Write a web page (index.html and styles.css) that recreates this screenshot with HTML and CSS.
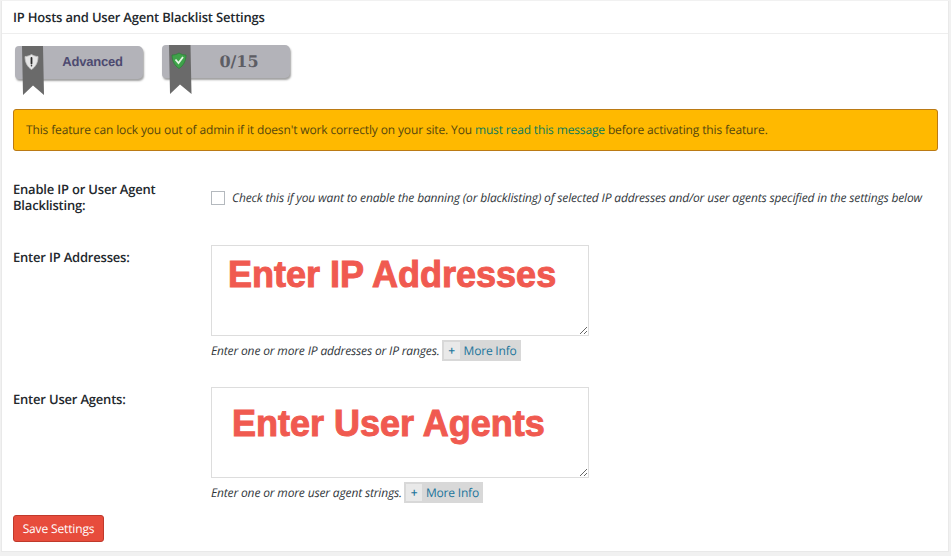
FILE: index.html
```html
<!DOCTYPE html>
<html lang="en">
<head>
<meta charset="utf-8">
<title>IP Hosts and User Agent Blacklist Settings</title>
<link rel="stylesheet" href="styles.css">
</head>
<body>
<div class="card">
  <h3 class="card-title">IP Hosts and User Agent Blacklist Settings</h3>
  <div class="card-body">
    <div class="badges">
      <div class="badge badge-level">
        <svg class="ribbon" width="23" height="50" viewBox="0 0 23 50">
          <path d="M0 0H21L22 49L11 39.500L1 49Z" fill="#6a6a6a"/>
          <path d="M9.500 8.500C12 10 14 10.500 16 10.500C16 16 14 20.500 9.500 23.500C5 20.500 3 16 3 10.500C5 10.500 7 10 9.500 8.500Z" fill="#e6e6e6" stroke="#c4c4c4" stroke-width=".8"/>
          <path d="M9.500 12V17.500" stroke="#2a2a2a" stroke-width="1.800" stroke-linecap="round"/>
          <circle cx="9.500" cy="19.800" r=".8" fill="#2a2a2a"/>
        </svg>
        <span class="badge-text">Advanced</span>
      </div>
      <div class="badge badge-score">
        <svg class="ribbon" width="23" height="50" viewBox="0 0 23 50">
          <path d="M0 0H21.500L22.500 49L11 39.500L1 49Z" fill="#6a6a6a"/>
          <path d="M10 8C12.500 9.500 14.500 10 17 10C17 16 14.500 20.500 10 23.500C5.500 20.500 3 16 3 10C5.500 10 7.500 9.500 10 8Z" fill="#3fa34a" stroke="#2f7f3a" stroke-width=".8"/>
          <path d="M6.500 14.500L9.500 18L14 12" fill="none" stroke="#e4f7e4" stroke-width="1.800"/>
        </svg>
        <span class="score-text">0/15</span>
      </div>
    </div>
    <div class="notice">This feature can lock you out of admin if it doesn't work correctly on your site. You <a class="notice-link" href="#">must read this message</a> before activating this feature.</div>
    <form class="settings">
      <div class="row row-check">
        <label class="row-label" for="enable">Enable IP or User Agent Blacklisting:</label>
        <div class="check-line">
          <input class="checkbox" id="enable" type="checkbox">
          <em class="desc">Check this if you want to enable the banning (or blacklisting) of selected IP addresses and/or user agents specified in the settings below</em>
        </div>
      </div>
      <div class="row row-ip">
        <label class="row-label" for="ips">Enter IP Addresses:</label>
        <div>
          <textarea class="area area-ip" id="ips">Enter IP Addresses</textarea>
          <div class="help">
            <em class="desc">Enter one or more IP addresses or IP ranges.</em>
            <span class="more"><span class="plus">+</span><span class="more-text">More Info</span></span>
          </div>
        </div>
      </div>
      <div class="row row-ua">
        <label class="row-label" for="uas">Enter User Agents:</label>
        <div>
          <textarea class="area area-ua" id="uas">Enter User Agents</textarea>
          <div class="help">
            <em class="desc">Enter one or more user agent strings.</em>
            <span class="more"><span class="plus">+</span><span class="more-text">More Info</span></span>
          </div>
        </div>
      </div>
      <button class="save" type="button">Save Settings</button>
    </form>
  </div>
</div>
</body>
</html>
```
FILE: styles.css
```css
* { box-sizing: border-box; }
html, body { margin: 0; height: 100%; }
body {
  background: #f1f1f1;
  font-family: "Open Sans", "Liberation Sans", sans-serif;
  font-size: 13px;
  color: #32373c;
  overflow: hidden;
  padding: 1px 2px 0 1px;
  text-rendering: geometricPrecision;
}
.card {
  background: #fff;
  border: 1px solid #e9e9e9;
  border-top: 0;
  height: 551px;
}
.card-title {
  margin: 0;
  height: 33px;
  padding: 0 0 0 11px;
  font-size: 13px;
  letter-spacing: -.2px;
  line-height: 33px;
  font-weight: 600;
  color: #23282d;
  border-bottom: 1px solid #eeeeee;
}
.card-body { padding: 0 10px 0 11px; }
.badges {
  display: flex;
  height: 75px;
  padding: 11px 0 0 2px;
  gap: 19px;
  align-items: flex-start;
}
.badge {
  position: relative;
  width: 128px;
  height: 33px;
  background: #b3b3b9;
  border-radius: 4px 5px 5px 4px;
  box-shadow: 1px 2px 2px #a2a2a2;
  display: flex;
  align-items: center;
  justify-content: center;
}
.badge-level { margin-top: 1px; }
.ribbon { position: absolute; left: 7px; top: 0; }
.badge-text {
  padding: 0 0 2px 27px;
  font-family: "Liberation Sans", sans-serif;
  font-weight: 700;
  font-size: 13px;
  letter-spacing: -.2px;
  color: #4d4a70;
}
.score-text {
  padding-left: 26px;
  font-family: "DejaVu Serif", "Liberation Serif", serif;
  font-weight: 700;
  font-size: 16px;
  color: #5d5d64;
}
.notice {
  height: 42px;
  background: #ffb900;
  border: 1px solid #bb7a14;
  border-radius: 3px;
  padding: 0 0 0 12px;
  line-height: 39px;
  font-size: 12px;
  letter-spacing: -.14px;
  color: #54460f;
}
.notice-link { color: #0a7a5c; text-decoration: none; }
.settings { display: flex; flex-direction: column; }
.row { display: grid; grid-template-columns: 198px 1fr; }
.row-label {
  font-size: 13px;
  letter-spacing: -.2px;
  line-height: 16px;
  font-weight: 600;
  color: #23282d;
}
.row-check { padding-top: 30px; height: 94px; }
.row-ip { height: 142px; }
.row-ua { height: 127px; }
.row-ip .row-label, .row-ua .row-label { padding-top: 4px; }
.row-check .row-label { width: 160px; }
.check-line { display: flex; align-items: center; height: 32px; }
.checkbox {
  appearance: none;
  width: 14px;
  height: 14px;
  margin: 1px 7px 0 0;
  border: 1px solid #b4b9be;
  background: #fff;
  flex: none;
}
.desc { font-size: 12px; letter-spacing: -.148px; color: #32373c; white-space: nowrap; }
.area {
  display: block;
  width: 378px;
  height: 91px;
  border: 1px solid #ddd;
  background: #fff;
  font-family: "Liberation Sans", sans-serif;
  font-weight: 700;
  font-size: 36px;
  line-height: 40px;
  color: #f05a50;
  -webkit-text-stroke: 1px #f05a50;
  overflow: hidden;
  outline: 0;
}
.area-ip { padding: 9px 0 0 16px; }
.area-ua { padding: 16px 0 0 20px; }
.help { display: flex; align-items: center; margin-top: 4px; height: 21px; }
.more {
  display: flex;
  align-items: center;
  height: 21px;
  margin-left: 2px;
  background: #d8d8d8;
  padding: 0 4px 0 2px;
  font-size: 12px;
  letter-spacing: -.2px;
  font-weight: 500;
}
.plus {
  width: 16px;
  text-align: center;
  background: #e9e9e9;
  color: #21759b;
  line-height: 17px;
  margin-right: 4px;
  font-weight: 600;
}
.more-text { color: #21759b; }
.save {
  align-self: flex-start;
  width: 91px;
  height: 27px;
  margin: 1px 0 0;
  padding: 0;
  background: #e74c3c;
  border: 1px solid #c0392b;
  border-radius: 3px;
  color: #fff;
  font-family: "Open Sans", sans-serif;
  font-size: 12px;
  letter-spacing: -.15px;
  font-weight: 400;
  text-rendering: geometricPrecision;
}
```
